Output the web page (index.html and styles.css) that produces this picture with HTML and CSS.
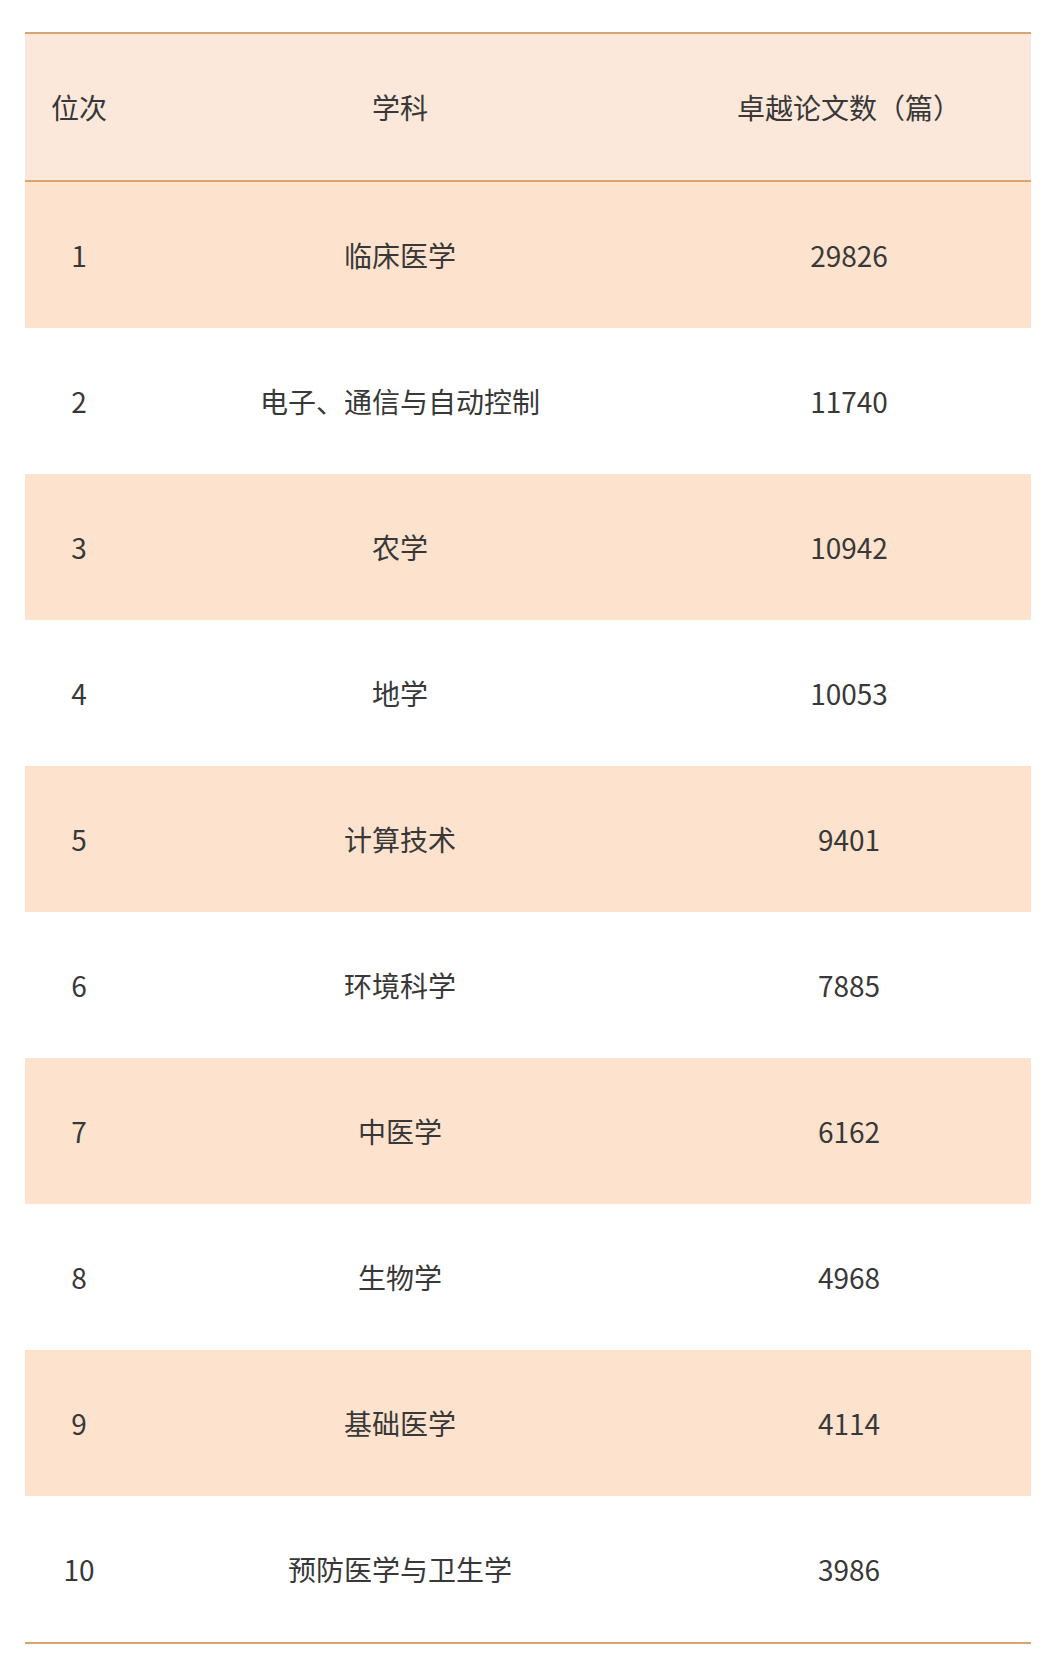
FILE: index.html
```html
<!DOCTYPE html>
<html lang="zh-CN">
<head>
<meta charset="utf-8">
<title>卓越论文数</title>
<link rel="stylesheet" href="styles.css">
</head>
<body>
<div class="table">
  <div class="row head">
    <div class="c1">位次</div><div class="c2">学科</div><div class="c3">卓越论文数（篇）</div>
  </div>
  <div class="row tint"><div class="c1">1</div><div class="c2">临床医学</div><div class="c3">29826</div></div>
  <div class="row"><div class="c1">2</div><div class="c2">电子、通信与自动控制</div><div class="c3">11740</div></div>
  <div class="row tint"><div class="c1">3</div><div class="c2">农学</div><div class="c3">10942</div></div>
  <div class="row"><div class="c1">4</div><div class="c2">地学</div><div class="c3">10053</div></div>
  <div class="row tint"><div class="c1">5</div><div class="c2">计算技术</div><div class="c3">9401</div></div>
  <div class="row"><div class="c1">6</div><div class="c2">环境科学</div><div class="c3">7885</div></div>
  <div class="row tint"><div class="c1">7</div><div class="c2">中医学</div><div class="c3">6162</div></div>
  <div class="row"><div class="c1">8</div><div class="c2">生物学</div><div class="c3">4968</div></div>
  <div class="row tint"><div class="c1">9</div><div class="c2">基础医学</div><div class="c3">4114</div></div>
  <div class="row last"><div class="c1">10</div><div class="c2">预防医学与卫生学</div><div class="c3">3986</div></div>
</div>
</body>
</html>
```
FILE: styles.css
```css
html, body {
  margin: 0;
  padding: 0;
  background: #ffffff;
}
body {
  padding: 32px 19px 0 25px;
  font-family: "Noto Sans CJK SC", "Noto Sans", sans-serif;
  font-size: 28px;
  color: #383838;
}
.table {
  width: 1006px;
  border-top: 2px solid #dba36e;
  border-bottom: 2px solid #dba36e;
}
.row {
  display: grid;
  grid-template-columns: 108px 534px 364px;
  height: 146px;
  align-items: center;
  text-align: center;
  background: #ffffff;
}
.row > div {
  line-height: 1;
}
.head {
  height: 146px;
  background: #fbe8da;
  border-bottom: 2px solid #dba36e;
}
.tint {
  background: #fde3ce;
}
.last {
  height: 146px;
}
```
